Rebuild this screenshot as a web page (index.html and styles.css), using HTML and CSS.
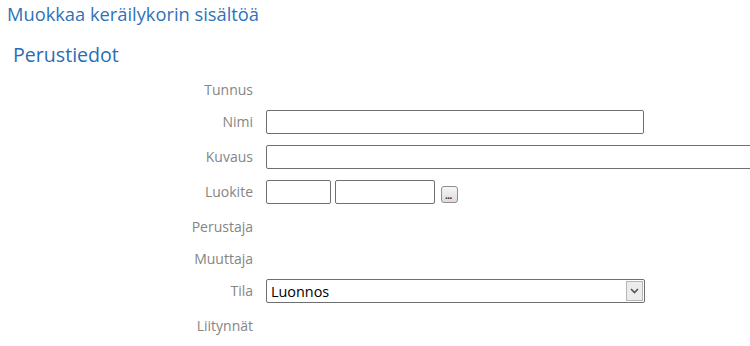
FILE: index.html
```html
<!DOCTYPE html>
<html lang="fi">
<head>
<meta charset="utf-8">
<title>Muokkaa keräilykorin sisältöä</title>
<link rel="stylesheet" href="styles.css">
</head>
<body>
<h1 class="page-title">Muokkaa keräilykorin sisältöä</h1>
<h2 class="section-title">Perustiedot</h2>
<form class="form">
  <div class="row text-row"><label class="lbl">Tunnus</label><div class="val"></div></div>
  <div class="row input-row"><label class="lbl">Nimi</label><div class="val"><input class="txt w-name" type="text"></div></div>
  <div class="row input-row"><label class="lbl">Kuvaus</label><div class="val"><input class="txt w-desc" type="text"></div></div>
  <div class="row input-row"><label class="lbl">Luokite</label><div class="val luokite"><input class="txt w-code" type="text"><input class="txt w-code2" type="text"><button type="button" class="dots-btn"><span class="dots">...</span></button></div></div>
  <div class="row text-row"><label class="lbl">Perustaja</label><div class="val"></div></div>
  <div class="row text-row"><label class="lbl">Muuttaja</label><div class="val"></div></div>
  <div class="row input-row"><label class="lbl">Tila</label><div class="val"><div class="select"><span class="select-text">Luonnos</span><span class="select-arrow"><svg width="9" height="6" viewBox="0 0 9 6"><path d="M1 1 L4.5 4.5 L8 1" fill="none" stroke="#555" stroke-width="1.6"/></svg></span></div></div></div>
  <div class="row text-row"><label class="lbl">Liitynnät</label><div class="val"></div></div>
</form>
</body>
</html>
```
FILE: styles.css
```css
html, body {
  margin: 0;
  padding: 0;
  background: #fff;
  overflow: hidden;
}
body {
  font-family: "Open Sans", "Noto Sans", sans-serif;
  width: 750px;
}
.page-title {
  margin: 0;
  padding: 0 0 0 7px;
  height: 28px;
  line-height: 28px;
  font-size: 18.3px;
  font-weight: 400;
  color: #2f72b8;
}
.section-title {
  margin: 0;
  padding: 0 0 0 13px;
  height: 46px;
  line-height: 54px;
  font-size: 19.6px;
  font-weight: 400;
  color: #2a6db5;
}
.form {
  display: flex;
  flex-direction: column;
}
.row {
  display: grid;
  grid-template-columns: 253px 1fr;
  column-gap: 13px;
}
.text-row {
  height: 32px;
  align-items: center;
}
.input-row {
  height: 35px;
  padding-top: 4px;
  box-sizing: border-box;
  align-items: start;
}
.lbl {
  text-align: right;
  color: #858585;
  font-size: 14px;
  line-height: 24px;
  white-space: nowrap;
}
.val {
  display: flex;
  align-items: flex-end;
  white-space: nowrap;
}
.txt {
  box-sizing: border-box;
  height: 24px;
  border: 1px solid #6f6f6f;
  border-radius: 2px;
  padding: 0 4px;
  margin: 0;
  font: inherit;
  background: #fff;
  flex: none;
}
.w-name { width: 378px; }
.w-desc { width: 520px; }
.w-code { width: 65px; }
.w-code2 { width: 100px; margin-left: 4px; }
.dots-btn {
  box-sizing: border-box;
  width: 17px;
  height: 17px;
  margin: 0 0 1px 6px;
  padding: 0;
  border: 1px solid #8e8e8e;
  border-radius: 3px;
  background: linear-gradient(#f6f6f6, #dcdcdc);
  position: relative;
}
.dots {
  position: absolute;
  left: 3px;
  top: 4px;
  font-size: 10px;
  line-height: 10px;
  font-weight: 700;
  color: #333;
  letter-spacing: -0.5px;
  font-family: "Liberation Sans", sans-serif;
}
.select {
  box-sizing: border-box;
  width: 379px;
  height: 24px;
  border: 1px solid #6f6f6f;
  border-radius: 2px;
  display: flex;
  align-items: center;
  justify-content: space-between;
  padding: 0 1px 0 4px;
}
.select-text {
  font-size: 14.4px;
  color: #000;
}
.select-arrow {
  box-sizing: border-box;
  width: 17px;
  height: 20px;
  border: 1px solid #b5b5b5;
  background: #ececec;
  display: flex;
  align-items: center;
  justify-content: center;
}
```
